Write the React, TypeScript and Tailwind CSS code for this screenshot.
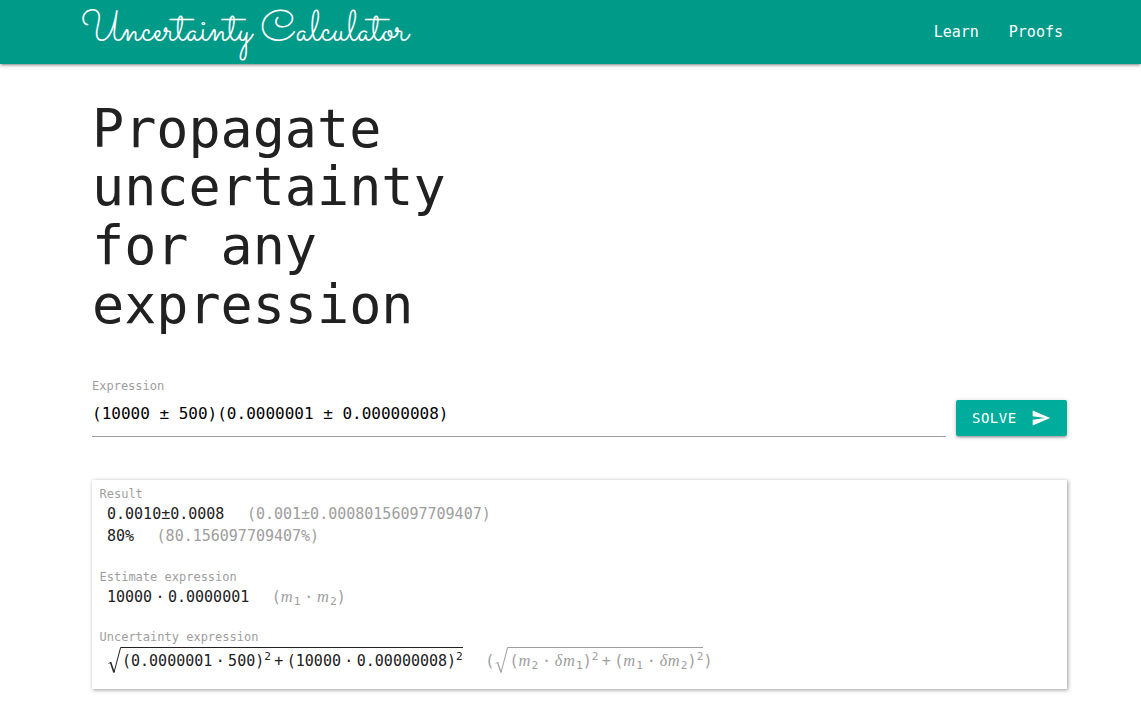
import type { ReactNode } from "react";

const M = ({ sub }: { sub: string }) => (
  <>
    <i className="inline-block w-[13px] font-['Liberation_Serif',serif] text-[16.5px] leading-none">m</i>
    <span className="relative top-[3px] text-[11.2px] leading-none">{sub}</span>
  </>
);

const Delta = () => (
  <i className="inline-block w-[8.2px] font-['Liberation_Serif',serif] text-[16px] leading-none">δ</i>
);

const Op = ({ children }: { children: ReactNode }) => (
  <span className="inline-block w-[15.8px] text-center">{children}</span>
);

const WideOp = ({ children }: { children: ReactNode }) => (
  <span className="inline-block w-[16.6px] text-center">{children}</span>
);

const Squared = () => <span className="relative -top-[6px] text-[11.2px] leading-none">2</span>;

const Root = ({ children, thin = false }: { children: ReactNode; thin?: boolean }) => (
  <span className="flex h-[30px] items-start">
    <svg className="mt-px h-[29px] w-[14px] shrink-0" viewBox="0 1 14 29" fill="none" stroke="currentColor">
      <path d="M1.5 18 L3.5 16" strokeWidth="0.8" />
      <path d="M3.5 16 L7 26.5" strokeWidth={thin ? 1.2 : 1.5} />
      <path d="M7 26.5 L13.6 1.5 H14" strokeWidth="1" />
    </svg>
    <span className="mt-px h-[29px] border-t border-current pl-px leading-[27px] whitespace-nowrap">{children}</span>
  </span>
);

const Label = ({ children }: { children: ReactNode }) => (
  <div className="h-[18px] text-[12px] leading-[18px] text-[#9e9e9e]">{children}</div>
);

export default function App() {
  return (
    <div className="h-[704px] overflow-hidden bg-white font-['DejaVu_Sans_Mono',monospace] text-[15px] leading-[22px] text-[#212121]">
      <nav className="flex h-16 justify-between bg-[#009a89] pr-[78px] pl-[81px] text-white shadow-[0_2px_2px_0_rgba(0,0,0,0.14),0_3px_1px_-2px_rgba(0,0,0,0.12),0_1px_5px_0_rgba(0,0,0,0.2)]">
        <a className="font-['Sacramento','Liberation_Serif',cursive] text-[42px] leading-[64px] whitespace-nowrap">
          Uncertainty Calculator
        </a>
        <div className="flex gap-[30px] leading-[64px]">
          <a>Learn</a>
          <a>Proofs</a>
        </div>
      </nav>
      <main className="ml-[92px] w-[975px]">
        <h2 className="w-[370px] pt-[35.6px] text-[53.4px] leading-[58.74px]">
          Propagate uncertainty for any expression
        </h2>
        <div className="mt-[42.04px] flex h-[60px] justify-between">
          <div className="w-[854px] border-b border-[#9e9e9e]">
            <div className="text-[12px] leading-[18px] text-[#9e9e9e]">Expression</div>
            <div className="pt-[8px] text-[16px] leading-[22px] text-black">(10000 ± 500)(0.0000001 ± 0.00000008)</div>
          </div>
          <button className="mt-[23px] flex h-9 w-[111px] items-center rounded-[2px] bg-[#00ac9b] pl-4 text-[14px] tracking-[0.5px] text-white shadow-[0_2px_2px_0_rgba(0,0,0,0.14),0_3px_1px_-2px_rgba(0,0,0,0.12),0_1px_5px_0_rgba(0,0,0,0.2)]">
            SOLVE
            <svg className="ml-[14px] size-5" viewBox="0 0 24 24" fill="currentColor">
              <path d="M2.01 21L23 12 2.01 3 2 10l15 2-15 2z" />
            </svg>
          </button>
        </div>
        <section className="mt-[43px] h-[209px] px-[7.5px] pt-[5px] shadow-[1px_1px_4px_rgba(0,0,0,0.4)]">
          <Label>Result</Label>
          <div className="flex gap-[22.5px] pl-[7.5px]">
            <span>0.0010±0.0008</span>
            <span className="text-[#9e9e9e]">(0.001±0.00080156097709407)</span>
          </div>
          <div className="flex gap-[22.5px] pl-[7.5px]">
            <span>80%</span>
            <span className="text-[#9e9e9e]">(80.156097709407%)</span>
          </div>
          <div className="mt-[21px]">
            <Label>Estimate expression</Label>
            <div className="flex h-[22px] gap-[22.5px] pl-[7.5px]">
              <span>10000<Op>·</Op>0.0000001</span>
              <span className="whitespace-nowrap text-[#9e9e9e]">(<M sub="1" /><WideOp>·</WideOp><M sub="2" />)</span>
            </div>
          </div>
          <div className="mt-[20px]">
            <Label>Uncertainty expression</Label>
            <div className="flex h-[30px] items-center gap-[22.5px] pl-[7.5px]">
              <Root>
                (0.0000001<Op>·</Op>500)<Squared /><Op>+</Op>(10000<Op>·</Op>0.00000008)<Squared />
              </Root>
              <span className="flex items-center text-[#9e9e9e]">
                <span>(</span>
                <Root thin>
                  (<M sub="2" /><WideOp>·</WideOp><Delta /><M sub="1" />)<Squared /><Op>+</Op>(<M sub="1" /><WideOp>·</WideOp><Delta /><M sub="2" />)<Squared />
                </Root>
                <span>)</span>
              </span>
            </div>
          </div>
        </section>
      </main>
    </div>
  );
}
